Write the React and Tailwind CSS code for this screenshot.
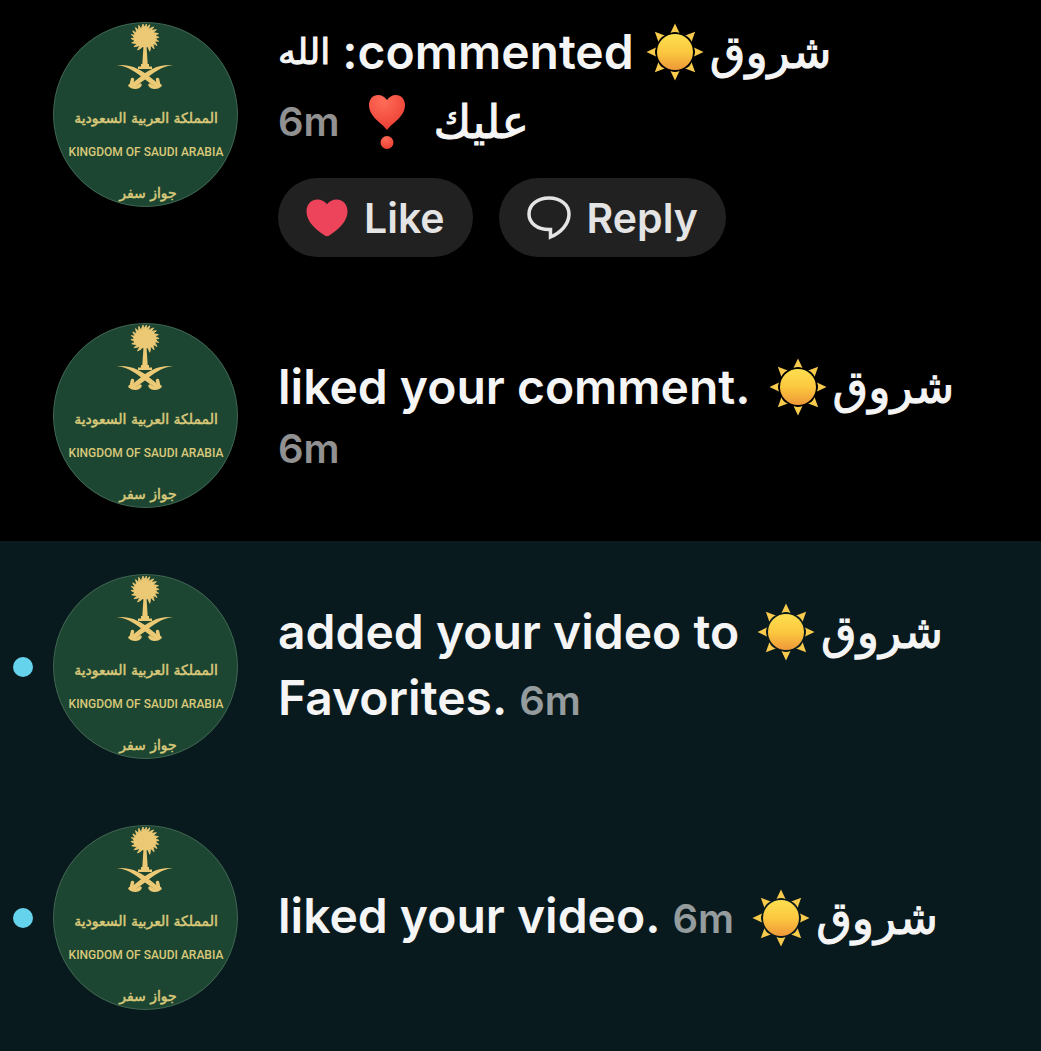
import React from "react";

const FRONDS = [-172, -156, -138, -122, -104, -90, -76, -58, -42, -24, -8, 8, 26, 44, 64, 116, 136, 154, 172];

function Avatar() {
  return (
    <svg
      viewBox="0 0 185 185"
      className="size-[185px] shrink-0 overflow-hidden rounded-full bg-[#1d4632]"
      role="img"
      aria-label="Profile photo"
    >
      <g fill="#ecc975" stroke="#ecc975">
        <ellipse cx="92" cy="16" rx="11" ry="9" />
        {FRONDS.map((a) => (
          <path
            key={a}
            d="M92 16c4-3 9-3 14 1.500c-5-.5-10 .5-14-1.500z"
            strokeWidth="0.800"
            transform={`rotate(${a} 92 16)`}
          />
        ))}
        <path d="M90.500 24h3l1.200 18h1.300v2.500h3v2.500h-14v-2.500h3v-2.500h1.300z" stroke="none" />
        <path
          d="M64 43c15-1 25 5 33 12l10 8-3 3-12-8.500C84 51 76 44.500 64 43z"
          stroke="none"
        />
        <path
          d="M120 43c-15-1-25 5-33 12l-10 8 3 3 12-8.500C100 51 108 44.500 120 43z"
          stroke="none"
        />
        <path
          d="M97 63c2 3 7 3 10 .5M104.500 57.500l1 4.500M87 63c-2 3-7 3-10 .5M79.500 57.500l-1 4.500"
          fill="none"
          strokeWidth="3.500"
          strokeLinecap="round"
        />
      </g>
      <g fill="#d9c97a" stroke="#d9c97a" textAnchor="middle">
        <text x="93" y="101" direction="rtl" strokeWidth="0.500" className="font-['DejaVu_Sans',sans-serif] text-[14px] font-normal">
          المملكة العربية السعودية
        </text>
        <text x="93" y="134" stroke="none" className="font-['Roboto',sans-serif] text-[12px] font-medium">
          KINGDOM OF SAUDI ARABIA
        </text>
        <text x="95" y="176" direction="rtl" strokeWidth="0.500" className="font-['DejaVu_Sans',sans-serif] text-[14px] font-normal">
          جواز سفر
        </text>
      </g>
      <circle cx="92.500" cy="92.500" r="92" fill="none" stroke="#446554" />
    </svg>
  );
}

function Sun() {
  return (
    <svg viewBox="0 0 58 58" className="size-[58px] shrink-0" role="img" aria-label="Sun">
      <defs>
        <linearGradient id="sun" x1="0" y1="0" x2="0" y2="1">
          <stop offset="0" stopColor="#fddf50" />
          <stop offset="0.500" stopColor="#fcc83f" />
          <stop offset="1" stopColor="#ee9838" />
        </linearGradient>
      </defs>
      {[0, 45, 90, 135, 180, 225, 270, 315].map((a) => (
        <path key={a} d="M29 0.500L33.500 10Q29 8 24.500 10Z" fill="#f8cb4c" transform={`rotate(${a} 29 29)`} />
      ))}
      <circle cx="29" cy="29" r="18" fill="url(#sun)" />
    </svg>
  );
}

function HeartExclamation() {
  return (
    <svg viewBox="0 0 38 56" className="h-[56px] w-[38px] shrink-0" role="img" aria-label="Heart exclamation">
      <defs>
        <radialGradient id="heart" cx="0.400" cy="0.200" r="0.800">
          <stop offset="0" stopColor="#ff6c58" />
          <stop offset="1" stopColor="#ec3f34" />
        </radialGradient>
      </defs>
      <path
        d="M19 36C14 29 1 23 1 11C1 5 5 1 10 1C14 1 17 3 19 6C21 3 24 1 28 1C33 1 37 5 37 11C37 23 24 29 19 36Z"
        fill="url(#heart)"
      />
      <circle cx="19" cy="48.500" r="6.500" fill="url(#heart)" />
    </svg>
  );
}

function Arabic({ size = "text-[46px]", children }) {
  return (
    <span
      dir="rtl"
      lang="ar"
      className={`font-['DejaVu_Sans',sans-serif] font-normal [-webkit-text-stroke:1px_#f5f5f5] ${size}`}
    >
      {children}
    </span>
  );
}

function Name() {
  return (
    <span className="flex items-center gap-[6px]">
      <Sun />
      <Arabic>شروق</Arabic>
    </span>
  );
}

function Time() {
  return <time className="text-[40px] font-semibold text-[#f5f5f5]/60">6m</time>;
}

function Row({ unread, children }) {
  return (
    <li className="flex items-center py-[33px]">
      <span className="flex w-[53px] shrink-0 pl-[13px]">
        {unread && <span className="size-5 rounded-full bg-[#66d3ed]" aria-label="Unread" />}
      </span>
      <Avatar />
      <div className="ml-10 min-w-0 flex-1">{children}</div>
    </li>
  );
}

export default function App() {
  return (
    <main className="min-h-screen bg-[#091a1e] font-['Inter',sans-serif] text-[48px] leading-[66px] font-semibold whitespace-nowrap text-[#f5f5f5]">
      <ul className="bg-black">
        <li className="flex items-start pt-[22px] pb-[33px] pl-[53px]">
          <Avatar />
          <div className="ml-10 min-w-0 flex-1">
            <p className="flex h-[60px] items-center gap-3">
              <Arabic size="text-[36px]">الله</Arabic>
              <span>:commented</span>
              <Name />
            </p>
            <p className="flex h-20 items-center gap-7">
              <Time />
              <HeartExclamation />
              <Arabic>عليك</Arabic>
            </p>
            <div className="mt-4 flex gap-[26px] text-[41px] leading-[50px] text-[#e4e4e4]">
              <button className="flex h-[79px] items-center gap-4 rounded-full bg-[#212121] px-7">
                <svg viewBox="0 0 44 40" className="h-10 w-[42px]" aria-hidden="true">
                  <path
                    d="M22 5.500C25 2 28 .5 32 .5C39 .5 43.500 6 43.500 13C43.500 24 34 32 24 38.500Q22 39.500 20 38.500C10 32 .5 24 .5 13C.5 6 5 .5 12 .5C16 .5 19 2 22 5.500Z"
                    fill="#ee445b"
                  />
                </svg>
                Like
              </button>
              <button className="flex h-[79px] items-center gap-4 rounded-full bg-[#212121] px-7">
                <svg viewBox="0 0 44 44" className="size-11" fill="none" stroke="#e4e4e4" strokeWidth="3.500" aria-hidden="true">
                  <path d="M22 2C33 2 42 8.500 42 18C42 28 34 36.500 23.500 41V33.500H22C10 33.500 2 27 2 18C2 8.500 11 2 22 2Z" />
                </svg>
                Reply
              </button>
            </div>
          </div>
        </li>
        <Row>
          <div className="pt-1">
            <p className="flex h-[62px] items-center gap-[18px]">
              <span>liked your comment.</span>
              <Name />
            </p>
            <p className="flex h-[62px] items-center">
              <Time />
            </p>
          </div>
        </Row>
      </ul>
      <ul>
        <Row unread>
          <p className="flex items-center gap-[18px]">
            <span>added your video to</span>
            <Name />
          </p>
          <p className="flex items-baseline gap-3">
            <span>Favorites.</span>
            <Time />
          </p>
        </Row>
        <Row unread>
          <p className="flex items-center gap-[18px]">
            <span className="flex items-baseline gap-3">
              <span>liked your video.</span>
              <Time />
            </span>
            <Name />
          </p>
        </Row>
      </ul>
    </main>
  );
}
